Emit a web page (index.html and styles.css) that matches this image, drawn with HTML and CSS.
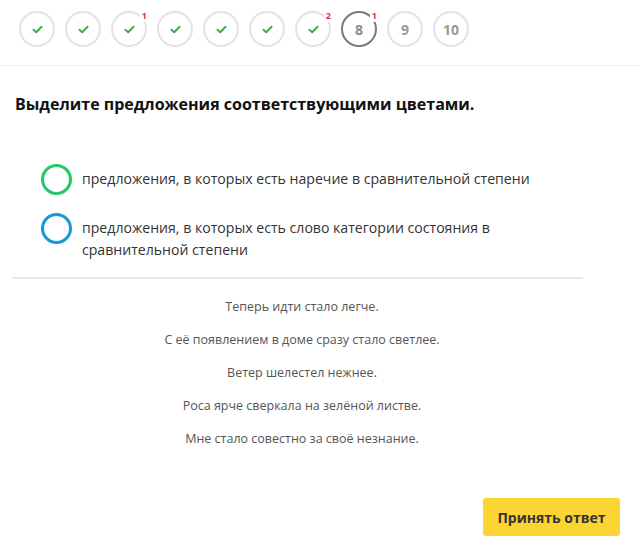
FILE: index.html
```html
<!DOCTYPE html>
<html lang="ru">
<head>
<meta charset="utf-8">
<title>Задание</title>
<link rel="stylesheet" href="styles.css">
</head>
<body>
<div class="steps">
  <div class="step done"><svg class="chk" viewBox="0 0 12 10"><path d="M1.5 5.2 L4.6 8 L10.5 2" /></svg></div>
  <div class="step done"><svg class="chk" viewBox="0 0 12 10"><path d="M1.5 5.2 L4.6 8 L10.5 2" /></svg></div>
  <div class="step done"><svg class="chk" viewBox="0 0 12 10"><path d="M1.5 5.2 L4.6 8 L10.5 2" /></svg><span class="badge">1</span></div>
  <div class="step done"><svg class="chk" viewBox="0 0 12 10"><path d="M1.5 5.2 L4.6 8 L10.5 2" /></svg></div>
  <div class="step done"><svg class="chk" viewBox="0 0 12 10"><path d="M1.5 5.2 L4.6 8 L10.5 2" /></svg></div>
  <div class="step done"><svg class="chk" viewBox="0 0 12 10"><path d="M1.5 5.2 L4.6 8 L10.5 2" /></svg></div>
  <div class="step done"><svg class="chk" viewBox="0 0 12 10"><path d="M1.5 5.2 L4.6 8 L10.5 2" /></svg><span class="badge">2</span></div>
  <div class="step current">8<span class="badge">1</span></div>
  <div class="step">9</div>
  <div class="step">10</div>
</div>

<h1 class="title">Выделите предложения соответствующими цветами.</h1>

<ul class="options">
  <li class="option"><span class="ring green"></span><span class="opt-text">предложения, в которых есть наречие в сравнительной степени</span></li>
  <li class="option"><span class="ring blue"></span><span class="opt-text">предложения, в которых есть слово категории состояния в сравнительной степени</span></li>
</ul>

<div class="sentences">
  <p>Теперь идти стало легче.</p>
  <p>С её появлением в доме сразу стало светлее.</p>
  <p>Ветер шелестел нежнее.</p>
  <p>Роса ярче сверкала на зелёной листве.</p>
  <p>Мне стало совестно за своё незнание.</p>
</div>

<div class="actions">
  <button class="submit">Принять ответ</button>
</div>
</body>
</html>
```

FILE: styles.css
```css
html, body {
  margin: 0;
  padding: 0;
  background: #fff;
  font-family: "Open Sans", "Noto Sans", "DejaVu Sans", sans-serif;
  color: #222;
}

.steps {
  display: flex;
  gap: 10px;
  padding: 11px 0 0 19px;
  height: 54px;
  border-bottom: 1px solid #eeeeee;
}

.step {
  position: relative;
  box-sizing: border-box;
  width: 36px;
  height: 36px;
  border: 2px solid #e3e3e3;
  border-radius: 50%;
  display: flex;
  align-items: center;
  justify-content: center;
  font-size: 14px;
  font-weight: 700;
  color: #999;
}

.step.current {
  border-color: #7a7a7a;
  color: #8a8a8a;
}

.chk {
  width: 11px;
  height: 9px;
  fill: none;
  stroke: #3fae49;
  stroke-width: 2.2;
  stroke-linecap: round;
  stroke-linejoin: round;
}

.badge {
  position: absolute;
  top: -4px;
  right: -4px;
  background: #fff;
  color: #e0383e;
  font-size: 9px;
  font-weight: 700;
  line-height: 11px;
  padding: 1px 2px;
}

.title {
  margin: 26px 0 0 15px;
  font-size: 16px;
  font-weight: 700;
  color: #111;
  line-height: 24px;
}

.options {
  list-style: none;
  margin: 52px 0 0 0;
  padding: 0 0 0 41px;
}

.option {
  display: flex;
  align-items: flex-start;
  gap: 10px;
  margin-bottom: 22px;
}

.option:last-child {
  margin-bottom: 0;
}

.ring {
  flex: none;
  box-sizing: border-box;
  width: 31px;
  height: 31px;
  border-radius: 50%;
  border: 3.5px solid;
  margin-top: -4px;
}

.ring.green { border-color: #24c866; }
.ring.blue { border-color: #149ad8; }

.opt-text {
  font-size: 14.1px;
  line-height: 22px;
  color: #333;
  max-width: 460px;
}

.sentences {
  margin: 16px 0 0 12px;
  width: 562px;
  border-top: 2px solid #e9e9e9;
  padding: 18px 0 0 9px;
  text-align: center;
}

.sentences p {
  margin: 0 0 13px 0;
  font-size: 12.5px;
  line-height: 20px;
  color: #555;
}

.actions {
  display: flex;
  justify-content: flex-end;
  padding: 36px 20px 0 0;
}

.submit {
  width: 137px;
  height: 38px;
  border: none;
  border-radius: 3px;
  background: #fcd535;
  color: #333;
  font-family: inherit;
  font-size: 14px;
  font-weight: 700;
}
```
